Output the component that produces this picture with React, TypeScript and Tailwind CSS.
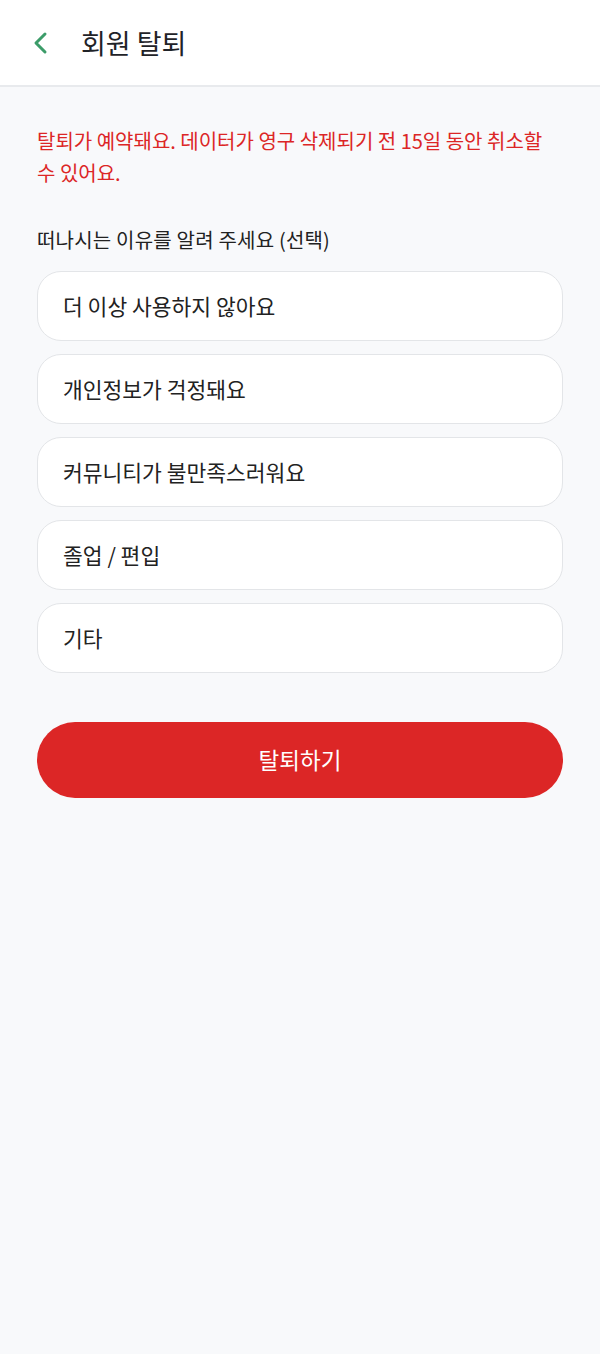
import React from "react";

const reasons = [
  "더 이상 사용하지 않아요",
  "개인정보가 걱정돼요",
  "커뮤니티가 불만족스러워요",
  "졸업 / 편입",
  "기타",
];

export default function App() {
  return (
    <div
      className="min-h-screen bg-[#f8f9fb] text-[#1f2328]"
      style={{ fontFamily: '"Noto Sans CJK KR", "Noto Sans", sans-serif' }}
    >
      <header className="flex h-[87px] items-center border-b-2 border-[#e8eaed] bg-white">
        <button className="ml-[28px] flex h-[32px] w-[26px] items-center justify-center">
          <svg width="20" height="24" viewBox="0 0 20 24" fill="none">
            <path
              d="M14 3 L5 12 L14 21"
              stroke="#3c9c69"
              strokeWidth="3"
              strokeLinecap="round"
              strokeLinejoin="round"
            />
          </svg>
        </button>
        <h1 className="ml-[27px] text-[27px] font-normal leading-none">
          회원 탈퇴
        </h1>
      </header>

      <main className="flex flex-col px-[37px] pt-[38px]">
        <p className="text-[20px] leading-[32px] text-[#dc2626]">
          탈퇴가 예약돼요. 데이터가 영구 삭제되기 전 15일 동안 취소할 수 있어요.
        </p>

        <p className="mt-[37px] text-[20px] leading-[28px] tracking-[0.2px] text-[#222]">
          떠나시는 이유를 알려 주세요 (선택)
        </p>

        <div className="mt-[17px] flex flex-col gap-[13px]">
          {reasons.map((r) => (
            <button
              key={r}
              className="flex h-[70px] items-center rounded-[24px] border border-[#e3e5e8] bg-white pl-[25px] text-left text-[21.5px] text-[#222]"
            >
              {r}
            </button>
          ))}
        </div>

        <button className="mt-[49px] flex h-[76px] items-center justify-center rounded-full bg-[#dc2626] text-[22.5px] font-normal text-white">
          탈퇴하기
        </button>
      </main>
    </div>
  );
}
